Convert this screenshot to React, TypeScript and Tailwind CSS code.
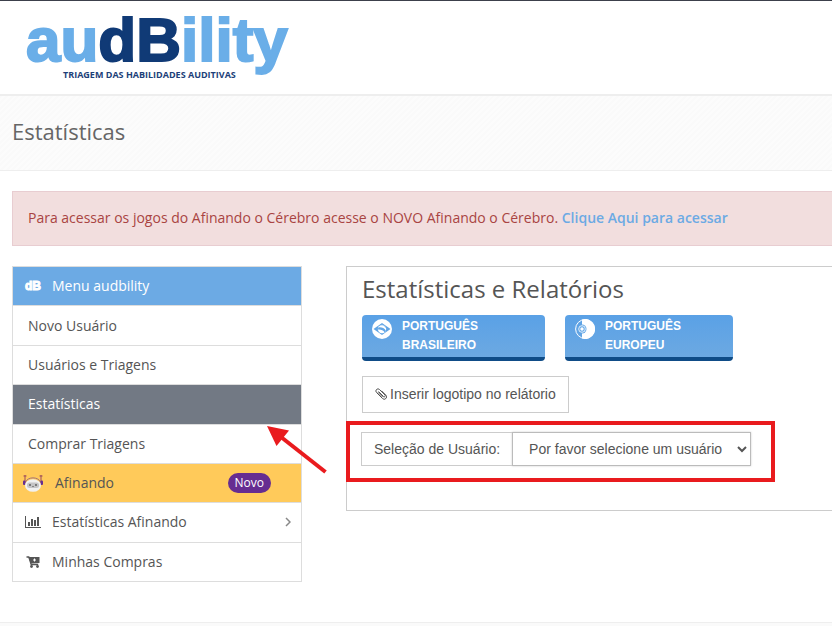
import type { ReactNode } from "react";

function DbIcon() {
  return (
    <span aria-hidden="true" className="font-['Liberation_Sans',Arial,sans-serif] text-xs font-bold [-webkit-text-stroke:1px_white]">
      dB
    </span>
  );
}

function RobotIcon() {
  return (
    <svg viewBox="0 0 20 18" className="h-[18px] w-5 shrink-0" aria-hidden="true">
      <path d="M2 1v8M18 1v8M0.500 2h3M16.500 2h3" stroke="#9a4a5c" strokeWidth="1" fill="none" />
      <path d="M2.500 8C5 2.500 15 2.500 17.500 8" fill="none" stroke="#a0717a" strokeWidth="1" />
      <rect x="0" y="6.500" width="2.500" height="4.500" rx="1" fill="#662d91" />
      <rect x="17.500" y="6.500" width="2.500" height="4.500" rx="1" fill="#662d91" />
      <ellipse cx="10" cy="11.500" rx="8" ry="6.300" fill="#f1f1f1" />
      <rect x="4" y="8.500" width="12" height="5.500" rx="2.500" fill="#c4c4c6" />
      <circle cx="7" cy="11" r="0.900" fill="#555" />
      <circle cx="13" cy="11" r="0.900" fill="#555" />
      <path d="M9 12.500h2" stroke="#777" strokeWidth="0.800" />
    </svg>
  );
}

function ChartIcon() {
  return (
    <svg viewBox="0 0 16 12" className="h-3 w-4" fill="#555" aria-hidden="true">
      <path d="M0 0h1v11h15v1H0zM3 6h2v4H3zM6 3h2v7H6zM9 4h2v6H9zM12 1h2v9h-2z" />
    </svg>
  );
}

function CartIcon() {
  return (
    <svg viewBox="0 0 14 12" className="h-3 w-3.5" aria-hidden="true">
      <path d="M0.500 1h2.300l2.400 7.500h7" fill="none" stroke="#555" strokeWidth="1.300" />
      <path d="M2.500 1h11v6L4.700 7.500z" fill="#555" />
      <circle cx="5.500" cy="10.500" r="1.400" fill="#555" />
      <circle cx="11.500" cy="10.500" r="1.400" fill="#555" />
      <path d="M8.500 2.500v3M7 4h3" stroke="#fff" strokeWidth="1" />
    </svg>
  );
}

function ClipIcon() {
  return (
    <svg viewBox="0 0 12 12" className="h-3 w-3" fill="none" stroke="#555" strokeWidth="1" aria-hidden="true">
      <path d="M3.500 3.500l5 5a1 1 0 0 0 1.500-1.500L4.500 1.500a2 2 0 0 0-3 3l6 6a2.300 2.300 0 0 0 3.400-3.300L6.500 2.800M2.800 4.200l5 5" />
    </svg>
  );
}

function BrazilIcon() {
  return (
    <svg viewBox="0 0 20 20" className="h-5 w-5 shrink-0" aria-hidden="true">
      <circle cx="10" cy="10" r="10" fill="#fff" />
      <path d="M1.500 10L10 4l8.500 6L10 16z" fill="#62a6e6" />
      <circle cx="10" cy="10" r="4.200" fill="#fff" />
      <path d="M6.200 8.500c3.200-.6 6 .6 7.600 3a4.200 4.200 0 0 1-1.200 1.700c-1.400-2-3.700-3-6.600-2.700z" fill="#62a6e6" />
      <path d="M7 6.900a4.200 4.200 0 0 1 6.900 1.800" stroke="#62a6e6" strokeWidth="0.800" fill="none" />
    </svg>
  );
}

function PortugalIcon() {
  return (
    <svg viewBox="0 0 20 20" className="h-5 w-5 shrink-0" aria-hidden="true">
      <circle cx="10" cy="10" r="9.400" fill="none" stroke="#fff" strokeWidth="1" />
      <path d="M7 0.500a10 10 0 1 1 0 19z" fill="#fff" />
      <circle cx="7" cy="10" r="4.500" fill="#62a6e6" />
      <circle cx="7" cy="10" r="3.300" fill="none" stroke="#fff" strokeWidth="0.800" />
      <circle cx="7" cy="10" r="1.700" fill="#fff" />
    </svg>
  );
}

type MenuItem = {
  label: string;
  icon?: ReactNode;
  look: string;
  badge?: string;
  arrow?: boolean;
};

const menu: MenuItem[] = [
  { label: "Menu audbility", icon: <DbIcon />, look: "bg-[#6caae4] text-white" },
  { label: "Novo Usuário", look: "bg-white" },
  { label: "Usuários e Triagens", look: "bg-white" },
  { label: "Estatísticas", look: "bg-[#727984] text-white" },
  { label: "Comprar Triagens", look: "bg-white" },
  { label: "Afinando", icon: <RobotIcon />, look: "bg-[#ffca5a]", badge: "Novo" },
  { label: "Estatísticas Afinando", icon: <ChartIcon />, look: "bg-white", arrow: true },
  { label: "Minhas Compras", icon: <CartIcon />, look: "bg-white" },
];

function SideMenu() {
  return (
    <nav className="relative w-[290px] shrink-0">
      <ul className="flex min-h-[316px] flex-col divide-y divide-[#ddd] border border-[#ddd]">
        {menu.map((item) => (
          <li key={item.label} className="flex flex-1">
            <a href="#" className={`flex flex-1 items-center pr-2.5 ${item.icon ? "pl-2" : "pl-[15px]"} ${item.look}`}>
              {item.icon && (
                <span className={`flex w-6 justify-center ${item.badge ? "mr-2.5" : "mr-[7px]"}`}>{item.icon}</span>
              )}
              <span>{item.label}</span>
              {item.badge && (
                <span className="mr-5 ml-auto rounded-full bg-[#662d91] px-[7px] text-xs leading-5 text-white">
                  {item.badge}
                </span>
              )}
              {item.arrow && (
                <svg viewBox="0 0 6 10" className="ml-auto h-2.5 w-1.5" fill="none" stroke="#888" strokeWidth="1.500" aria-hidden="true">
                  <path d="M1 1l4 4-4 4" />
                </svg>
              )}
            </a>
          </li>
        ))}
      </ul>
      {/* Pointer to the current menu entry */}
      <svg viewBox="0 0 60 48" className="absolute top-[160px] left-[255px] h-12 w-[60px]" aria-hidden="true">
        <path d="M14 11L58.500 46" stroke="#e91b1e" strokeWidth="4" />
        <path d="M0 0l22 4.500L9.500 20z" fill="#e91b1e" />
      </svg>
    </nav>
  );
}

function LanguageButton({ icon, children }: { icon: ReactNode; children: ReactNode }) {
  return (
    <button
      type="button"
      className="flex items-start gap-2.5 rounded border-b-4 border-[#0f4c87] bg-linear-to-b from-[#5aa1e6] to-[#6ca9e2] py-0.5 pr-[52px] pl-2.5 text-left font-['Liberation_Sans',Arial,sans-serif] text-xs leading-[19px] font-bold text-white"
    >
      <span className="pt-0.5">{icon}</span>
      <span>{children}</span>
    </button>
  );
}

function Panel() {
  return (
    <section className="min-h-[245px] flex-1 border border-r-0 border-[#ccc] pl-[15px]">
      <h2 className="pt-[5px] text-2xl leading-[34px]">Estatísticas e Relatórios</h2>
      <div className="mt-[9px] flex gap-5">
        <LanguageButton icon={<BrazilIcon />}>
          <span className="block pr-[15px]">PORTUGUÊS</span>
          BRASILEIRO
        </LanguageButton>
        <LanguageButton icon={<PortugalIcon />}>
          PORTUGUÊS
          <br />
          EUROPEU
        </LanguageButton>
      </div>
      <button
        type="button"
        className="mt-[15px] flex h-[37px] items-center gap-[3px] border border-[#ccc] px-3 pb-px font-['Liberation_Sans',Arial,sans-serif] text-sm"
      >
        <ClipIcon />
        Inserir logotipo no relátorio
      </button>
      <div className="relative mt-[19px] -ml-px flex w-max font-['Liberation_Sans',Arial,sans-serif] text-sm">
        <label htmlFor="user" className="flex h-[34px] items-center border border-r-0 border-[#ccc] px-3">
          Seleção de Usuário:
        </label>
        <select id="user" className="h-[34px] w-[239px] border border-[#bbb] bg-white pl-3 shadow-[0_0_2px_#ccc]">
          <option>Por favor selecione um usuário</option>
        </select>
        {/* Highlight around the user picker */}
        <div className="pointer-events-none absolute -top-[11px] -right-[24px] -bottom-[16px] -left-[15px] border-4 border-[#e91b1e]" />
      </div>
    </section>
  );
}

export default function App() {
  return (
    <div className="min-h-screen overflow-hidden bg-white font-['Open_Sans','Noto_Sans',sans-serif] text-sm leading-5 text-[#555]">
      <header className="border-t border-b-2 border-t-[#3c404b] border-b-[#eee] pt-[11px] pb-3 pl-[26px]">
        <div className="w-max font-['Liberation_Sans',Arial,sans-serif] text-[62px] leading-[56px] font-bold text-[#6aaee8] [-webkit-text-stroke:2px_currentColor]">
          au<span className="text-[#103a76]">dB</span>ility
        </div>
        <p className="pt-px pb-px pl-[37px] text-[9px] leading-3 font-bold text-[#1c4078]">
          TRIAGEM DAS HABILIDADES AUDITIVAS
        </p>
      </header>

      <div className="border-b border-[#eee] bg-[repeating-linear-gradient(135deg,#fafafa_0_2px,#fcfcfc_2px_4px)] px-3 pt-[19px] pb-[23px]">
        <h1 className="text-[22px] leading-8 text-[#666]">Estatísticas</h1>
      </div>

      <main className="pt-5 pb-[40px] pl-3">
        <p className="border border-r-0 border-[#e8cdd1] bg-[#f2dede] px-[15px] pt-[15px] pb-[17px] leading-[21px] text-[#a94442]">
          Para acessar os jogos do Afinando o Cérebro acesse o NOVO Afinando o Cérebro.{" "}
          <a href="#" className="font-semibold text-[#6caae4]">
            Clique Aqui para acessar
          </a>
        </p>
        <div className="mt-5 flex items-start gap-11">
          <SideMenu />
          <Panel />
        </div>
      </main>
      <footer className="h-4 border-t border-[#eee] bg-[#fafafa]" />
    </div>
  );
}
